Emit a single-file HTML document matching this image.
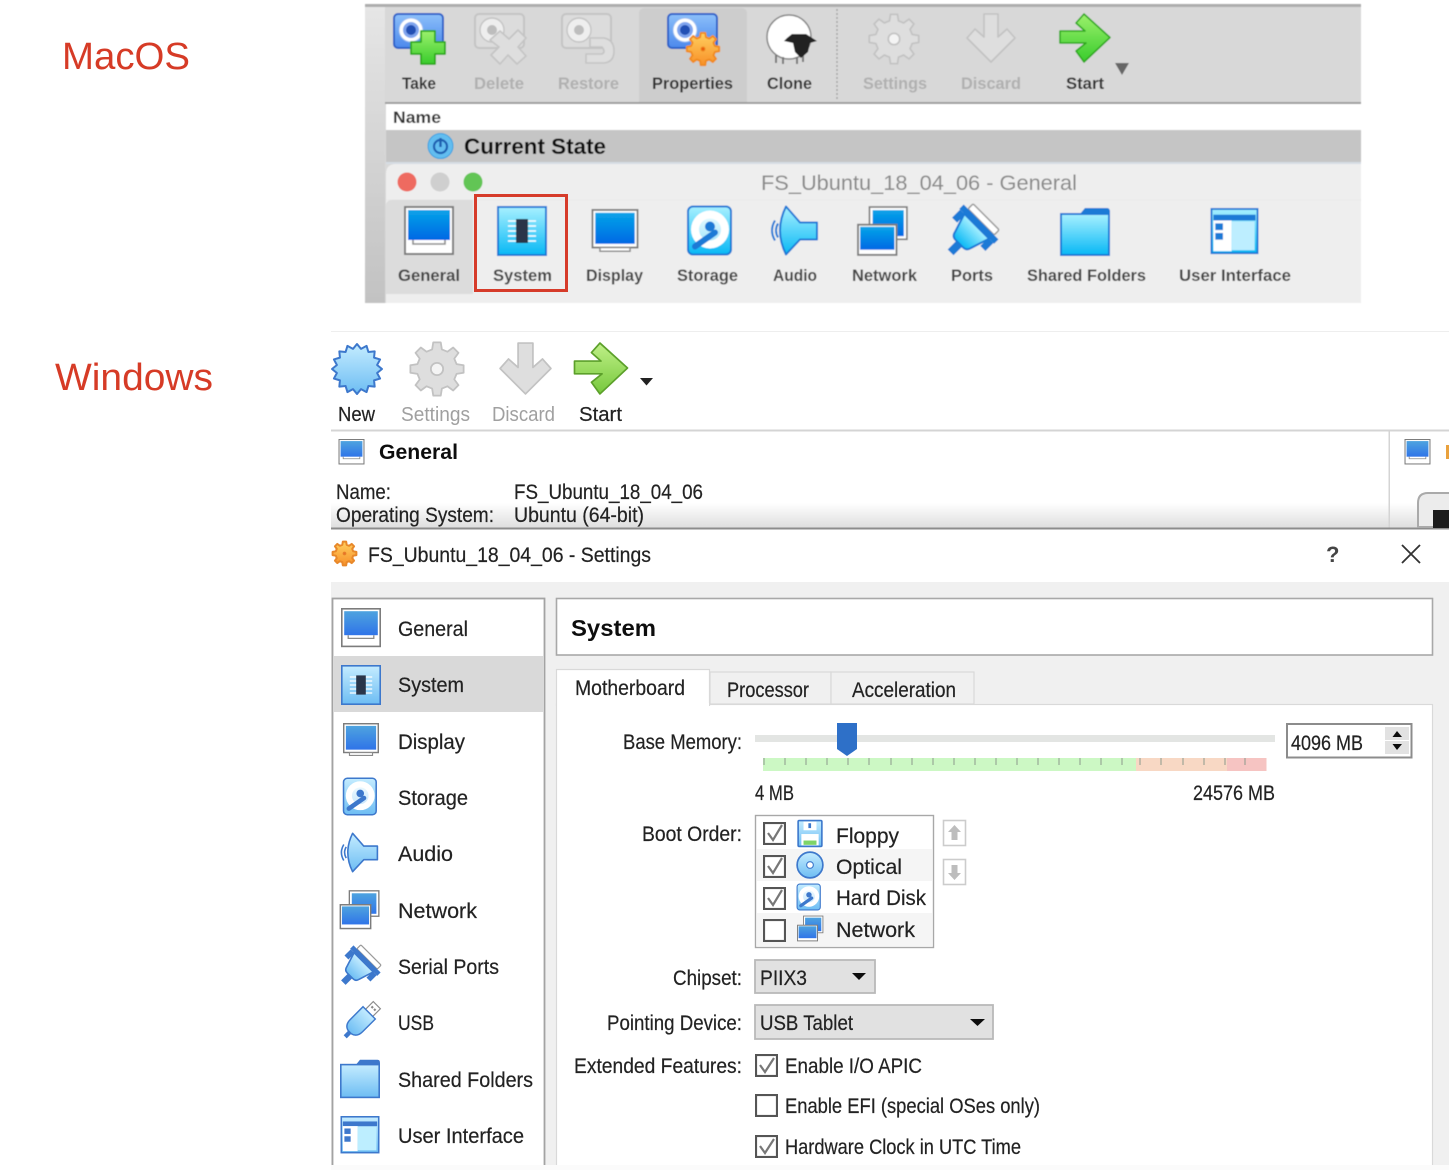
<!DOCTYPE html>
<html><head><meta charset="utf-8"><title>VirtualBox settings</title>
<style>
html,body{margin:0;padding:0;background:#fff;width:1450px;height:1170px;overflow:hidden}
svg{display:block}
symbol{overflow:visible}
text{font-family:"Liberation Sans",sans-serif;fill:#222}
.f{fill:var(--g)}.sc{fill:var(--s)}.o{stroke:var(--o)}.of{fill:var(--o)}
.m{--g:url(#gm);--s:url(#sm);--o:#1a7ad6}
.w{--g:url(#gw);--s:url(#sw);--o:#3d78cc}
.mt{font-size:17px;font-weight:bold;fill:#333}
.md{font-size:17px;font-weight:bold;fill:#b0b0b0}
.wt{font-size:20px;fill:#222;stroke:#222;stroke-width:.2px}
.wd{font-size:20px;fill:#a0a0a0}
.l{font-size:21px;fill:#222;stroke:#222;stroke-width:.2px}
.hub{r:var(--gr,5.5px)}
</style></head><body>
<svg width="1450" height="1170" viewBox="0 0 1450 1170" xmlns="http://www.w3.org/2000/svg">
<defs>
<linearGradient id="gm" x1="0" y1="0" x2="0" y2="1"><stop offset="0" stop-color="#a8f0ff"/><stop offset="1" stop-color="#08b8f5"/></linearGradient>
<linearGradient id="sm" x1="0" y1="0" x2="0" y2="1"><stop offset="0" stop-color="#08a4e8"/><stop offset="1" stop-color="#0068e4"/></linearGradient>
<linearGradient id="gw" x1="0" y1="0" x2="0" y2="1"><stop offset="0" stop-color="#c4ecff"/><stop offset="1" stop-color="#6dbdf3"/></linearGradient>
<linearGradient id="sw" x1="0" y1="0" x2="0" y2="1"><stop offset="0" stop-color="#4ea3df"/><stop offset="1" stop-color="#2f74e8"/></linearGradient>
<linearGradient id="gr" x1="0" y1="0" x2="0" y2="1"><stop offset="0" stop-color="#9cf06c"/><stop offset="1" stop-color="#38cc2c"/></linearGradient>
<linearGradient id="gw2" x1="0" y1="0" x2="0" y2="1"><stop offset="0" stop-color="#c0f088"/><stop offset="1" stop-color="#76c83c"/></linearGradient>
<linearGradient id="or" x1="0" y1="0" x2="0" y2="1"><stop offset="0" stop-color="#ffd060"/><stop offset="1" stop-color="#f89028"/></linearGradient>
<linearGradient id="camg" x1="0" y1="0" x2="0" y2="1"><stop offset="0" stop-color="#8cc0fa"/><stop offset="1" stop-color="#4c88ec"/></linearGradient>
<linearGradient id="fade" x1="0" y1="0" x2="0" y2="1"><stop offset="0" stop-color="#fff"/><stop offset="1" stop-color="#dedede"/></linearGradient>
<linearGradient id="side" x1="0" y1="0" x2="0" y2="1"><stop offset="0" stop-color="#e6e6e6"/><stop offset="1" stop-color="#c2c2c2"/></linearGradient>
<filter id="b5" x="-2%" y="-2%" width="104%" height="104%"><feGaussianBlur stdDeviation="0.55"/></filter>
<filter id="b3" x="-2%" y="-2%" width="104%" height="104%"><feGaussianBlur stdDeviation="0.35"/></filter>

<symbol id="general" viewBox="0 0 50 50"><rect x="1" y="1" width="48" height="47" fill="#fff" stroke="#7c7c7c" stroke-width="2"/><rect x="4" y="4" width="42" height="30" class="sc"/><path d="M9 34v4h32v-4" fill="none" stroke="#8a8a8a" stroke-width="1.6"/></symbol>
<symbol id="system" viewBox="0 0 50 50"><rect x="1" y="1" width="48" height="48" class="f o" stroke-width="2"/><path d="M11 15h28M11 20h28M11 25h28M11 30h28M11 35h28" stroke="#fff" stroke-width="1.5"/><rect x="19" y="13" width="12" height="24" fill="#2b3648"/></symbol>
<symbol id="display" viewBox="0 0 50 50"><rect x="1" y="1" width="48" height="40" fill="#fff" stroke="#7c7c7c" stroke-width="2"/><rect x="4" y="4" width="42" height="33" class="sc"/><path d="M9 41v4h32v-4z" fill="#fff" stroke="#8a8a8a" stroke-width="1.6"/></symbol>
<symbol id="storage" viewBox="0 0 50 50"><rect x="2" y="1" width="43" height="48" rx="5" class="f o" stroke-width="2"/><circle cx="24" cy="24" r="19" fill="#fff"/><circle cx="24" cy="24" r="11" class="f" opacity=".35"/><path d="M9 41L29 27" class="o" stroke-width="6" stroke-linecap="round"/><circle cx="24" cy="21" r="5" class="of"/></symbol>
<symbol id="audio" viewBox="0 0 50 50"><path d="M6 15Q0 25 6 35M9 18Q5 25 9 32" fill="none" class="o" stroke-width="2"/><path d="M17 1L31 17H48V34H31L17 49Q11 37 11 25Q11 13 17 1Z" class="f o" stroke-width="2" stroke-linejoin="round"/></symbol>
<symbol id="network" viewBox="0 0 50 50"><rect x="12" y="1" width="36" height="31" fill="#fff" stroke="#7c7c7c" stroke-width="1.6"/><rect x="15" y="4" width="30" height="25" class="sc"/><rect x="1" y="18" width="37" height="29" fill="#fff" stroke="#7c7c7c" stroke-width="1.8"/><rect x="3" y="20" width="33" height="22" class="sc"/></symbol>
<symbol id="ports" viewBox="0 0 50 50"><g transform="translate(25 25) rotate(45) scale(.95) translate(-25 -16.500)"><rect x="7" y="-3" width="36" height="7" rx="1.500" fill="#fff" stroke="#9a9a9a" stroke-width="1.500"/><rect x="1" y="4" width="48" height="6" class="of"/><path d="M8 10H42L36 29Q35 34 30 34H20Q15 34 14 29Z" class="f o" stroke-width="2"/><rect x="2" y="10" width="7" height="11" class="of"/><rect x="41" y="10" width="7" height="11" class="of"/><rect x="21" y="34" width="8" height="12" class="of"/></g></symbol>
<symbol id="usb" viewBox="0 0 50 50"><g transform="translate(25 25) rotate(45) scale(.88) translate(-25 -24)"><rect x="18" y="-8" width="14" height="15" fill="#fff" stroke="#8a8a8a" stroke-width="1.6"/><path d="M21 -3h3v3h-3zM26 -3h3v3h-3z" fill="#888"/><path d="M13 7H37V32Q37 43 28 45H22Q13 43 13 32Z" class="f o" stroke-width="2"/><rect x="22" y="45" width="6" height="9" class="of"/></g></symbol>
<symbol id="folder" viewBox="0 0 50 50"><path d="M20 7L25 1H47Q50 1 50 5V9H20Z" class="of"/><rect x="1" y="7" width="48" height="41" class="f o" stroke-width="2"/></symbol>
<symbol id="ui" viewBox="0 0 50 50"><rect x="1" y="1" width="48" height="46" class="f o" stroke-width="2"/><rect x="3" y="7" width="44" height="6" class="of"/><rect x="3" y="13" width="19" height="32" fill="#fff"/><rect x="22" y="14" width="24" height="30" fill="#bdeeff"/><rect x="5" y="16" width="8" height="7" class="of"/><rect x="5" y="26" width="8" height="7" class="of"/></symbol>
<symbol id="floppy" viewBox="0 0 50 50"><rect x="3" y="1" width="44" height="48" rx="2" class="f o" stroke-width="3"/><rect x="13" y="3" width="24" height="16" fill="#fff"/><rect x="22" y="6" width="5" height="9" class="of"/><rect x="9" y="26" width="32" height="21" fill="#fff"/><rect x="13" y="38" width="24" height="8" fill="#7ed468"/></symbol>
<symbol id="optical" viewBox="0 0 50 50"><circle cx="25" cy="25" r="23" class="f o" stroke-width="3"/><circle cx="25" cy="25" r="6" fill="#fff" class="o" stroke-width="2"/></symbol>
<symbol id="gear" viewBox="0 0 50 50"><g transform="translate(25 25)"><path d="M17.47-4.35L23.77-3.34V3.34L17.47 4.35L15.43 9.27L19.17 14.44L14.44 19.17L9.27 15.43L4.35 17.47L3.34 23.77H-3.34L-4.35 17.47L-9.27 15.43L-14.44 19.17L-19.17 14.44L-15.43 9.27L-17.47 4.35L-23.77 3.34V-3.34L-17.47-4.35L-15.43-9.27L-19.17-14.44L-14.44-19.17L-9.27-15.43L-4.35-17.47L-3.34-23.77H3.34L4.35-17.47L9.27-15.43L14.44-19.17L19.17-14.44L15.43-9.27Z" fill="var(--gf,#dedede)" stroke="var(--gs,#c2c2c2)" stroke-width="var(--gw,1.6)" stroke-linejoin="round"/><circle class="hub" r="5.5" fill="var(--gc,#f4f4f4)" stroke="var(--gs,#c2c2c2)" stroke-width="1.6"/></g></symbol>
<symbol id="burst" viewBox="0 0 54 54"><g transform="translate(27 27)"><path d="M25 0L20.1 4L23.1 9.57L17.05 11.39L17.68 17.68L11.39 17.05L9.57 23.1L4 20.1L0 25L-4 20.1L-9.57 23.1L-11.39 17.05L-17.68 17.68L-17.05 11.39L-23.1 9.57L-20.1 4L-25 0L-20.1-4L-23.1-9.57L-17.05-11.39L-17.68-17.68L-11.39-17.05L-9.57-23.1L-4-20.1L0-25L4-20.1L9.57-23.1L11.39-17.05L17.68-17.68L17.05-11.39L23.1-9.57L20.1-4Z" fill="url(#gw)" stroke="#3d78cc" stroke-width="2" stroke-linejoin="round"/></g></symbol>
<symbol id="arrow" viewBox="0 0 52 50"><path d="M1 18H26L17 10L25 1L51 24.500L25 49L17 38L27 30H1Z" fill="var(--ar)" stroke="var(--as)" stroke-width="1.6" stroke-linejoin="round"/></symbol>
<symbol id="down" viewBox="0 0 50 50"><path d="M18 1H32V24L41 16L49 25L25 49L1 25L9 16L18 24Z" fill="var(--gf,#dedede)" stroke="#c2c2c2" stroke-width="1.6" stroke-linejoin="round"/></symbol>
<symbol id="camera" viewBox="0 0 52 52"><rect x="1" y="1" width="49" height="34" rx="4" fill="url(#camg)" stroke="#2f62c8" stroke-width="2"/><circle cx="18" cy="17" r="12" fill="#fff" stroke="#9abcf0" stroke-width="1"/><circle cx="18" cy="17" r="8" fill="#7fa4ee"/><circle cx="18" cy="17" r="5" fill="#2050b4"/></symbol>
<symbol id="camd" viewBox="0 0 52 52"><rect x="1" y="1" width="49" height="34" rx="4" fill="#dcdcdc" stroke="#c4c4c4" stroke-width="2"/><circle cx="18" cy="17" r="12" fill="#eee" stroke="#c4c4c4" stroke-width="1.400"/><circle cx="18" cy="17" r="5" fill="#bdbdbd"/></symbol>
<symbol id="check" viewBox="0 0 22 22"><rect x="1" y="1" width="20" height="20" fill="#fff" stroke="#555" stroke-width="2"/></symbol>
</defs>

<rect width="1450" height="1170" fill="#fff"/>
<text x="62" y="69" font-size="38" textLength="128" lengthAdjust="spacingAndGlyphs" style="fill:#d63b26">MacOS</text>
<text x="55" y="390" font-size="38" textLength="158" lengthAdjust="spacingAndGlyphs" style="fill:#d63b26">Windows</text>

<!-- MAC -->
<g filter="url(#b5)">
<rect x="365" y="5" width="996" height="298" fill="#d9d9d9"/>
<rect x="365" y="5" width="20" height="298" fill="url(#side)"/>
<rect x="365" y="4" width="996" height="3" fill="#adadad"/>
<rect x="385" y="8" width="976" height="95" fill="#d8d8d8"/>
<path d="M639 103V14Q639 8 645 8H741Q747 8 747 14V103Z" fill="#cdcdcd"/>
<path d="M837 9V100" stroke="#999" stroke-width="1.200" stroke-dasharray="2 2"/>
<rect x="385" y="102" width="976" height="2" fill="#9d9d9d"/>
<rect x="386" y="104" width="975" height="26" fill="#fff"/>
<rect x="386" y="130" width="975" height="33" fill="#c5c5c5"/>
<rect x="386" y="162" width="975" height="2" fill="#d6dce4"/>
<path d="M386 303V174Q386 164 396 164H1361V303Z" fill="#eeeeee"/>
<path d="M386 200H1361" stroke="#e8e8e8"/>
<path d="M386 294V206Q386 200 392 200H473V294Z" fill="#dcdcdc"/>
<circle cx="407" cy="182" r="9.500" fill="#ee6a60"/><circle cx="440" cy="182" r="9.500" fill="#cfcfcf"/><circle cx="473" cy="182" r="9.500" fill="#62c554"/>

<use href="#camera" x="393" y="13" width="52" height="52"/>
<path d="M421 42H411V54H421V64H435V54H445V42H435V31H421Z" fill="url(#gr)" stroke="#2ea81f" stroke-width="1.800" stroke-linejoin="round"/>
<use href="#camd" x="474" y="13" width="52" height="52"/>
<path d="M490 40L500 31L509 39L518 30L526 38L518 47L526 56L517 64L508 55L500 64L491 55L499 47Z" fill="#dedede" stroke="#c4c4c4" stroke-width="1.600" stroke-linejoin="round"/>
<use href="#camd" x="561" y="13" width="52" height="52"/>
<path d="M590 38H604Q614 40 614 51Q614 62 604 63H586V54H602Q606 52 602 47H590Z" fill="#dedede" stroke="#c4c4c4" stroke-width="1.600" stroke-linejoin="round"/>
<use href="#camera" x="667" y="13" width="52" height="52"/>
<use href="#gear" x="686" y="32" width="34" height="34" style="--gf:url(#or);--gs:#f08c20;--gc:#ea5a10;--gw:3;--gr:3px"/>
<!-- sheep -->
<circle cx="789" cy="37" r="22" fill="#fff" stroke="#888" stroke-width="1.500"/>
<path d="M776 55v8M783 57v7M797 57v7M803 55v7" stroke="#777" stroke-width="2"/>
<path d="M787 38L792 34H806L817 41L810 43L808 52L801 58L795 52L793 43L784 41Z" fill="#222"/>
<use href="#gear" x="868" y="13" width="52" height="52"/>
<use href="#down" x="966" y="13" width="50" height="50"/>
<use href="#arrow" x="1059" y="13" width="52" height="50" style="--ar:url(#gr);--as:#2ea81f"/>
<path d="M1115 63H1129L1122 75Z" fill="#666"/>

<text class="mt" x="402" y="89" textLength="34" lengthAdjust="spacingAndGlyphs">Take</text>
<text class="md" x="474" y="89" textLength="50" lengthAdjust="spacingAndGlyphs">Delete</text>
<text class="md" x="558" y="89" textLength="61" lengthAdjust="spacingAndGlyphs">Restore</text>
<text class="mt" x="652" y="89" textLength="81" lengthAdjust="spacingAndGlyphs">Properties</text>
<text class="mt" x="767" y="89" textLength="45" lengthAdjust="spacingAndGlyphs">Clone</text>
<text class="md" x="863" y="89" textLength="64" lengthAdjust="spacingAndGlyphs">Settings</text>
<text class="md" x="961" y="89" textLength="60" lengthAdjust="spacingAndGlyphs">Discard</text>
<text class="mt" x="1066" y="89" textLength="38" lengthAdjust="spacingAndGlyphs">Start</text>
<text class="mt" x="393" y="123" textLength="48" lengthAdjust="spacingAndGlyphs">Name</text>
<circle cx="440.500" cy="146" r="12.500" fill="#62bdf0" stroke="#3aa0e0"/>
<circle cx="440.500" cy="146.500" r="6.500" fill="none" stroke="#1d5fb0" stroke-width="2.200"/>
<path d="M440.500 138V147" stroke="#1d5fb0" stroke-width="2.400"/>
<text x="464" y="154" font-size="22" font-weight="bold" textLength="142" lengthAdjust="spacingAndGlyphs" style="fill:#111">Current State</text>
<text x="761" y="190" font-size="21" textLength="316" lengthAdjust="spacingAndGlyphs" style="fill:#888">FS_Ubuntu_18_04_06 - General</text>

<g class="m">
<use href="#general" x="404" y="206" width="50" height="50"/>
<use href="#system" x="497" y="206" width="50" height="50"/>
<use href="#display" x="590" y="209" width="50" height="47"/>
<use href="#storage" x="686" y="204" width="50" height="53"/>
<use href="#audio" x="769" y="204" width="50" height="53"/>
<use href="#network" x="857" y="206" width="52" height="52"/>
<use href="#ports" x="945" y="204" width="54" height="54"/>
<use href="#folder" x="1059" y="207" width="52" height="50"/>
<use href="#ui" x="1209" y="208" width="51" height="48"/>
</g>
<g>
<text class="mt" x="398" y="281" textLength="62" lengthAdjust="spacingAndGlyphs" style="fill:#444">General</text>
<text class="mt" x="493" y="281" textLength="59" lengthAdjust="spacingAndGlyphs" style="fill:#444">System</text>
<text class="mt" x="586" y="281" textLength="57" lengthAdjust="spacingAndGlyphs" style="fill:#444">Display</text>
<text class="mt" x="677" y="281" textLength="61" lengthAdjust="spacingAndGlyphs" style="fill:#444">Storage</text>
<text class="mt" x="773" y="281" textLength="44" lengthAdjust="spacingAndGlyphs" style="fill:#444">Audio</text>
<text class="mt" x="852" y="281" textLength="65" lengthAdjust="spacingAndGlyphs" style="fill:#444">Network</text>
<text class="mt" x="951" y="281" textLength="42" lengthAdjust="spacingAndGlyphs" style="fill:#444">Ports</text>
<text class="mt" x="1027" y="281" textLength="119" lengthAdjust="spacingAndGlyphs" style="fill:#444">Shared Folders</text>
<text class="mt" x="1179" y="281" textLength="112" lengthAdjust="spacingAndGlyphs" style="fill:#444">User Interface</text>
</g>
</g>
<rect x="475.500" y="195.500" width="91" height="95" fill="none" stroke="#d63b2a" stroke-width="3"/>

<!-- WINDOWS -->
<g filter="url(#b3)">
<rect x="331" y="331" width="1119" height="1" fill="#eee"/>
<use href="#burst" x="330" y="342" width="54" height="54"/>
<use href="#gear" x="409" y="341" width="56" height="56"/>
<use href="#down" x="499" y="341" width="53" height="55"/>
<use href="#arrow" x="573" y="342" width="56" height="53" style="--ar:url(#gw2);--as:#5ca02c"/>
<path d="M640 378H653L646.500 385.500Z" fill="#222"/>
<text class="wt" x="338" y="421" textLength="37" lengthAdjust="spacingAndGlyphs">New</text>
<text class="wd" x="401" y="421" textLength="69" lengthAdjust="spacingAndGlyphs">Settings</text>
<text class="wd" x="492" y="421" textLength="63" lengthAdjust="spacingAndGlyphs">Discard</text>
<text class="wt" x="579" y="421" textLength="43" lengthAdjust="spacingAndGlyphs">Start</text>
<rect x="331" y="429.500" width="1119" height="2" fill="#d4d4d4"/>
<rect x="331" y="503" width="1119" height="25" fill="url(#fade)"/>
<rect x="1388.500" y="431" width="1.500" height="97" fill="#d4d4d4"/>
<rect x="331" y="527.500" width="1119" height="2" fill="#8c8c8c"/>
<g class="w">
<use href="#general" x="338" y="439" width="27" height="26"/>
<use href="#general" x="1404" y="439" width="27" height="26"/>
</g>
<rect x="1446" y="445" width="4" height="14" fill="#e9a13d"/>
<path d="M1418 527V503Q1418 493 1428 493H1450V527Z" fill="#ececec" stroke="#aaa" stroke-width="2"/>
<rect x="1433" y="510" width="17" height="18" fill="#1c1c1c"/>
<text x="379" y="459" font-size="21" font-weight="bold" textLength="79" lengthAdjust="spacingAndGlyphs" style="fill:#111">General</text>
<text class="l" x="336" y="499" textLength="55" lengthAdjust="spacingAndGlyphs">Name:</text>
<text class="l" x="514" y="499" textLength="189" lengthAdjust="spacingAndGlyphs">FS_Ubuntu_18_04_06</text>
<text class="l" x="336" y="522" textLength="158" lengthAdjust="spacingAndGlyphs">Operating System:</text>
<text class="l" x="514" y="522" textLength="130" lengthAdjust="spacingAndGlyphs">Ubuntu (64-bit)</text>

<use href="#gear" x="332" y="541" width="25" height="25" style="--gf:url(#or);--gs:#e8882a;--gc:#e8702a;--gw:4;--gr:3px"/>
<text class="l" x="368" y="562" textLength="283" lengthAdjust="spacingAndGlyphs">FS_Ubuntu_18_04_06 - Settings</text>
<text x="1326" y="562" font-size="22" font-weight="bold" style="fill:#444">?</text>
<path d="M1402 545L1420 563M1420 545L1402 563" stroke="#333" stroke-width="1.800"/>

<rect x="331" y="582" width="1119" height="583" fill="#f0f0f0"/>
<rect x="332.500" y="598.500" width="212" height="568" fill="#fff" stroke="#a3a3a3" stroke-width="1.800"/>
<rect x="334" y="656" width="210" height="56" fill="#d9d9d9"/>
<g class="w">
<use href="#general" x="341" y="608" width="40" height="40"/>
<use href="#system" x="341" y="665" width="40" height="40"/>
<use href="#display" x="341" y="723" width="40" height="36"/>
<use href="#storage" x="342" y="776" width="38" height="41"/>
<use href="#audio" x="339" y="832" width="40" height="41"/>
<use href="#network" x="339" y="890" width="42" height="41"/>
<use href="#ports" x="339" y="945" width="42" height="42"/>
<use href="#usb" x="340" y="1001" width="41" height="41"/>
<use href="#folder" x="339" y="1059" width="42" height="40"/>
<use href="#ui" x="339" y="1116" width="42" height="39"/>
</g>
<text class="l" x="398" y="636" textLength="70" lengthAdjust="spacingAndGlyphs">General</text>
<text class="l" x="398" y="692" textLength="66" lengthAdjust="spacingAndGlyphs">System</text>
<text class="l" x="398" y="749" textLength="67" lengthAdjust="spacingAndGlyphs">Display</text>
<text class="l" x="398" y="805" textLength="70" lengthAdjust="spacingAndGlyphs">Storage</text>
<text class="l" x="398" y="861" textLength="55" lengthAdjust="spacingAndGlyphs">Audio</text>
<text class="l" x="398" y="918" textLength="79" lengthAdjust="spacingAndGlyphs">Network</text>
<text class="l" x="398" y="974" textLength="101" lengthAdjust="spacingAndGlyphs">Serial Ports</text>
<text class="l" x="398" y="1030" textLength="36" lengthAdjust="spacingAndGlyphs">USB</text>
<text class="l" x="398" y="1087" textLength="135" lengthAdjust="spacingAndGlyphs">Shared Folders</text>
<text class="l" x="398" y="1143" textLength="126" lengthAdjust="spacingAndGlyphs">User Interface</text>

<rect x="556.500" y="598.500" width="876" height="56.500" fill="#fff" stroke="#a8a8a8" stroke-width="1.600"/>
<text x="571" y="636" font-size="23" font-weight="bold" textLength="85" lengthAdjust="spacingAndGlyphs" style="fill:#111">System</text>

<rect x="556.500" y="704.500" width="876" height="462" fill="#fff" stroke="#d9d9d9" stroke-width="1.200"/>
<rect x="710" y="672" width="121" height="32" fill="#f0f0f0" stroke="#d9d9d9" stroke-width="1.200"/>
<rect x="831" y="672" width="143" height="32" fill="#f0f0f0" stroke="#d9d9d9" stroke-width="1.200"/>
<path d="M556.500 706V669.500H709.500V706" fill="#fff" stroke="#d9d9d9" stroke-width="1.200"/>
<rect x="558" y="703" width="151" height="4" fill="#fff"/>
<text class="l" x="575" y="695" textLength="110" lengthAdjust="spacingAndGlyphs">Motherboard</text>
<text class="l" x="727" y="697" textLength="82" lengthAdjust="spacingAndGlyphs">Processor</text>
<text class="l" x="852" y="697" textLength="104" lengthAdjust="spacingAndGlyphs">Acceleration</text>

<text class="l" x="623" y="749" textLength="119" lengthAdjust="spacingAndGlyphs">Base Memory:</text>
<rect x="755" y="735" width="520" height="7" fill="#e3e5e3"/>
<rect x="763" y="758" width="373" height="13" fill="#ccf8c4"/>
<rect x="1136" y="758" width="91" height="13" fill="#f8d8c4"/>
<rect x="1227" y="758" width="39.500" height="13" fill="#f6c4c2"/>
<path d="M764 758v7M785 758v7M806 758v7M827 758v7M848 758v7M869 758v7M891 758v7M912 758v7M933 758v7M954 758v7M975 758v7M996 758v7M1017 758v7M1038 758v7M1059 758v7M1080 758v7M1101 758v7M1122 758v7M1140 758v7M1161 758v7M1183 758v7M1204 758v7M1225 758v7M1245 758v7" stroke="#8c9a8c" stroke-width="1"/>
<path d="M837 723H857V749L847 756L837 749Z" fill="#2e70c8"/>
<rect x="1287" y="724" width="124.500" height="33.500" fill="#fff" stroke="#8c8c8c" stroke-width="2"/>
<text class="l" x="1291" y="750" textLength="72" lengthAdjust="spacingAndGlyphs">4096 MB</text>
<rect x="1385" y="727" width="24" height="27" fill="#e2e2e2"/>
<path d="M1385 740.500H1409" stroke="#fff"/>
<path d="M1392.500 737H1402L1397 731Z M1392.500 744H1402L1397 750Z" fill="#111"/>
<text class="l" x="755" y="800" textLength="39" lengthAdjust="spacingAndGlyphs">4 MB</text>
<text class="l" x="1193" y="800" textLength="82" lengthAdjust="spacingAndGlyphs">24576 MB</text>

<text class="l" x="642" y="841" textLength="100" lengthAdjust="spacingAndGlyphs">Boot Order:</text>
<rect x="755.500" y="815.500" width="178" height="132" fill="#fff" stroke="#a8a8a8" stroke-width="1.400"/>
<rect x="757" y="849" width="175" height="32" fill="#f5f5f5"/>
<rect x="757" y="913" width="175" height="33" fill="#f5f5f5"/>
<g class="w">
<use href="#check" x="763" y="822" width="23" height="23"/>
<use href="#check" x="763" y="855" width="23" height="23"/>
<use href="#check" x="763" y="887" width="23" height="23"/>
<use href="#check" x="763" y="919" width="23" height="23"/>
<path d="M768 833L773 840L782 825M768 866L773 873L782 858M768 898L773 905L782 890" fill="none" stroke="#777" stroke-width="2.200"/>
<use href="#floppy" x="796" y="820" width="28" height="27"/>
<use href="#optical" x="796" y="851" width="28" height="28"/>
<use href="#storage" x="796" y="883" width="27" height="28"/>
<use href="#network" x="797" y="915" width="27" height="28"/>
</g>
<text class="l" x="836" y="843" textLength="63" lengthAdjust="spacingAndGlyphs">Floppy</text>
<text class="l" x="836" y="874" textLength="66" lengthAdjust="spacingAndGlyphs">Optical</text>
<text class="l" x="836" y="905" textLength="90" lengthAdjust="spacingAndGlyphs">Hard Disk</text>
<text class="l" x="836" y="937" textLength="79" lengthAdjust="spacingAndGlyphs">Network</text>
<rect x="943.500" y="820.500" width="22" height="25" fill="#fff" stroke="#ccc" stroke-width="1.600"/>
<rect x="943.500" y="859.500" width="22" height="25" fill="#fff" stroke="#ccc" stroke-width="1.600"/>
<path d="M954.500 825L961 832H957.500V840H951.500V832H948Z" fill="#bdbdbd"/>
<path d="M954.500 880L961 873H957.500V865H951.500V873H948Z" fill="#bdbdbd"/>

<text class="l" x="673" y="985" textLength="69" lengthAdjust="spacingAndGlyphs">Chipset:</text>
<rect x="755" y="960" width="120" height="33" fill="#e1e1e1" stroke="#b9b9b9" stroke-width="1.800"/>
<text class="l" x="760" y="985" textLength="47" lengthAdjust="spacingAndGlyphs">PIIX3</text>
<path d="M852 973H866L859 980Z" fill="#111"/>
<text class="l" x="607" y="1030" textLength="135" lengthAdjust="spacingAndGlyphs">Pointing Device:</text>
<rect x="755" y="1005" width="238" height="34" fill="#e1e1e1" stroke="#b9b9b9" stroke-width="1.800"/>
<text class="l" x="760" y="1030" textLength="93" lengthAdjust="spacingAndGlyphs">USB Tablet</text>
<path d="M970 1019H985L977.500 1026Z" fill="#111"/>
<text class="l" x="574" y="1073" textLength="168" lengthAdjust="spacingAndGlyphs">Extended Features:</text>
<use href="#check" x="755" y="1054" width="23" height="23"/>
<use href="#check" x="755" y="1094" width="23" height="23"/>
<use href="#check" x="755" y="1135" width="23" height="23"/>
<path d="M760 1065L765 1072L774 1058M760 1146L765 1153L774 1139" fill="none" stroke="#777" stroke-width="2.200"/>
<text class="l" x="785" y="1073" textLength="137" lengthAdjust="spacingAndGlyphs">Enable I/O APIC</text>
<text class="l" x="785" y="1113" textLength="255" lengthAdjust="spacingAndGlyphs">Enable EFI (special OSes only)</text>
<text class="l" x="785" y="1154" textLength="236" lengthAdjust="spacingAndGlyphs">Hardware Clock in UTC Time</text>
</g>
<rect x="331" y="1165" width="1119" height="5" fill="#fbfbfb"/>
<rect x="1449" y="325" width="1" height="845" fill="#fff"/>
</svg>
</body></html>
